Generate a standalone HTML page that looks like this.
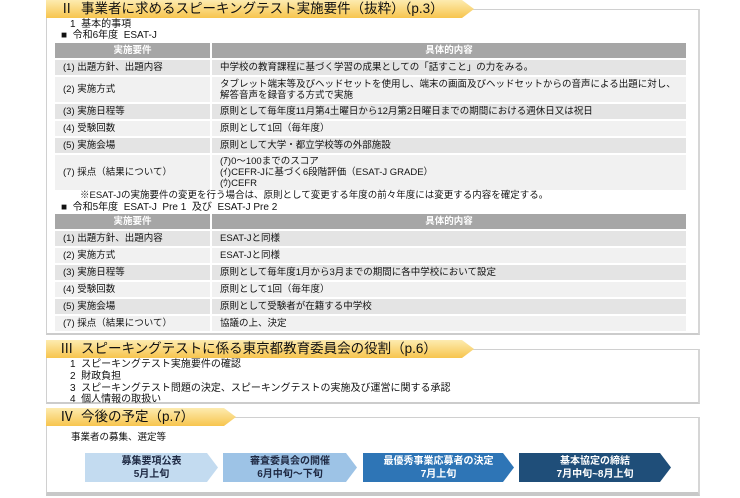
<!DOCTYPE html>
<html><head><meta charset="utf-8"><style>
*{margin:0;padding:0;box-sizing:border-box}
body{width:740px;height:498px;background:#fff;position:relative;overflow:hidden;font-family:"Liberation Sans","Noto Sans CJK JP",sans-serif;color:#111}
.panel{position:absolute;left:46px;width:654px;border:1px solid #d0d0d0;border-right:2px solid #d6d6d6;border-bottom:2px solid #ccc}
.tab{position:absolute;left:46px;height:18px;background:linear-gradient(#fdebb0,#f7c54e);font-size:13.5px;line-height:18px;padding-left:14px;white-space:nowrap;clip-path:polygon(0 0,calc(100% - 12px) 0,100% 50%,calc(100% - 12px) 100%,0 100%)}
.t{position:absolute;font-size:10px;line-height:12px;white-space:nowrap}
table{position:absolute;left:55px;width:631px;border-collapse:separate;border-spacing:0 2px;font-size:9.5px}
td{padding:0 0 0 8px;height:15px;line-height:11px}
td:first-child{width:157px;border-right:2px solid #fff}
tr.h td{background:#a6a6a6;color:#fff;font-weight:bold;text-align:center;padding:0}
tr:nth-child(even) td{background:#e4e4e4}
tr:nth-child(odd):not(.h) td{background:#f1f1f1}
.ar{position:absolute;top:453px;height:29px;color:#fff;font-weight:bold;font-size:10px;line-height:13px;text-align:center;padding-top:2px;clip-path:polygon(0 0,calc(100% - 11px) 0,100% 50%,calc(100% - 11px) 100%,0 100%)}
</style></head><body>
<div class="panel" style="top:9px;height:326px"></div>
<div class="tab" style="top:0;width:428px">Ⅱ&nbsp; 事業者に求めるスピーキングテスト実施要件（抜粋）（p.3）</div>
<div class="t" style="left:70px;top:19px">1&nbsp; 基本的事項</div>
<div class="t" style="left:61px;top:30px">■&nbsp; 令和6年度&nbsp; ESAT-J</div>
<table style="top:41px">
<tr class="h"><td style="height:14px">実施要件</td><td>具体的内容</td></tr>
<tr><td>(1) 出題方針、出題内容</td><td>中学校の教育課程に基づく学習の成果としての「話すこと」の力をみる。</td></tr>
<tr><td style="height:25px">(2) 実施方式</td><td>タブレット端末等及びヘッドセットを使用し、端末の画面及びヘッドセットからの音声による出題に対し、<br>解答音声を録音する方式で実施</td></tr>
<tr><td>(3) 実施日程等</td><td>原則として毎年度11月第4土曜日から12月第2日曜日までの期間における週休日又は祝日</td></tr>
<tr><td>(4) 受験回数</td><td>原則として1回（毎年度）</td></tr>
<tr><td>(5) 実施会場</td><td>原則として大学・都立学校等の外部施設</td></tr>
<tr><td style="height:35px">(7) 採点（結果について）</td><td>(ｱ)0～100までのスコア<br>(ｲ)CEFR-Jに基づく6段階評価（ESAT-J GRADE）<br>(ｳ)CEFR</td></tr>
</table>
<div class="t" style="left:80px;top:190px;font-size:9.5px">※ESAT-Jの実施要件の変更を行う場合は、原則として変更する年度の前々年度には変更する内容を確定する。</div>
<div class="t" style="left:61px;top:202px">■&nbsp; 令和5年度&nbsp; ESAT-J&nbsp; Pre 1&nbsp; 及び&nbsp; ESAT-J Pre 2</div>
<table style="top:212px">
<tr class="h"><td style="height:14px">実施要件</td><td>具体的内容</td></tr>
<tr><td>(1) 出題方針、出題内容</td><td>ESAT-Jと同様</td></tr>
<tr><td>(2) 実施方式</td><td>ESAT-Jと同様</td></tr>
<tr><td>(3) 実施日程等</td><td>原則として毎年度1月から3月までの期間に各中学校において設定</td></tr>
<tr><td>(4) 受験回数</td><td>原則として1回（毎年度）</td></tr>
<tr><td>(5) 実施会場</td><td>原則として受験者が在籍する中学校</td></tr>
<tr><td>(7) 採点（結果について）</td><td>協議の上、決定</td></tr>
</table>
<div class="panel" style="top:349px;height:55px"></div>
<div class="tab" style="top:340px;width:428px">Ⅲ&nbsp; スピーキングテストに係る東京都教育委員会の役割（p.6）</div>
<div class="t" style="left:70px;top:359px">1&nbsp; スピーキングテスト実施要件の確認</div>
<div class="t" style="left:70px;top:371px">2&nbsp; 財政負担</div>
<div class="t" style="left:70px;top:383px">3&nbsp; スピーキングテスト問題の決定、スピーキングテストの実施及び運営に関する承認</div>
<div class="t" style="left:70px;top:394px">4&nbsp; 個人情報の取扱い</div>
<div class="panel" style="top:417px;height:79px;border-bottom:4px solid #c8c8c8"></div>
<div class="tab" style="top:408px;width:190px">Ⅳ&nbsp; 今後の予定（p.7）</div>
<div class="t" style="left:71px;top:432px;font-size:9.5px">事業者の募集、選定等</div>
<div class="ar" style="left:85px;width:133px;background:#c3dbf0;color:#1f2a44">募集要項公表<br>5月上旬</div>
<div class="ar" style="left:223px;width:134px;background:#9dc3e6;color:#1f2a44">審査委員会の開催<br>6月中旬～下旬</div>
<div class="ar" style="left:363px;width:151px;background:#2e75b6">最優秀事業応募者の決定<br>7月上旬</div>
<div class="ar" style="left:519px;width:152px;background:#1f4e79">基本協定の締結<br>7月中旬~8月上旬</div>
</body></html>
